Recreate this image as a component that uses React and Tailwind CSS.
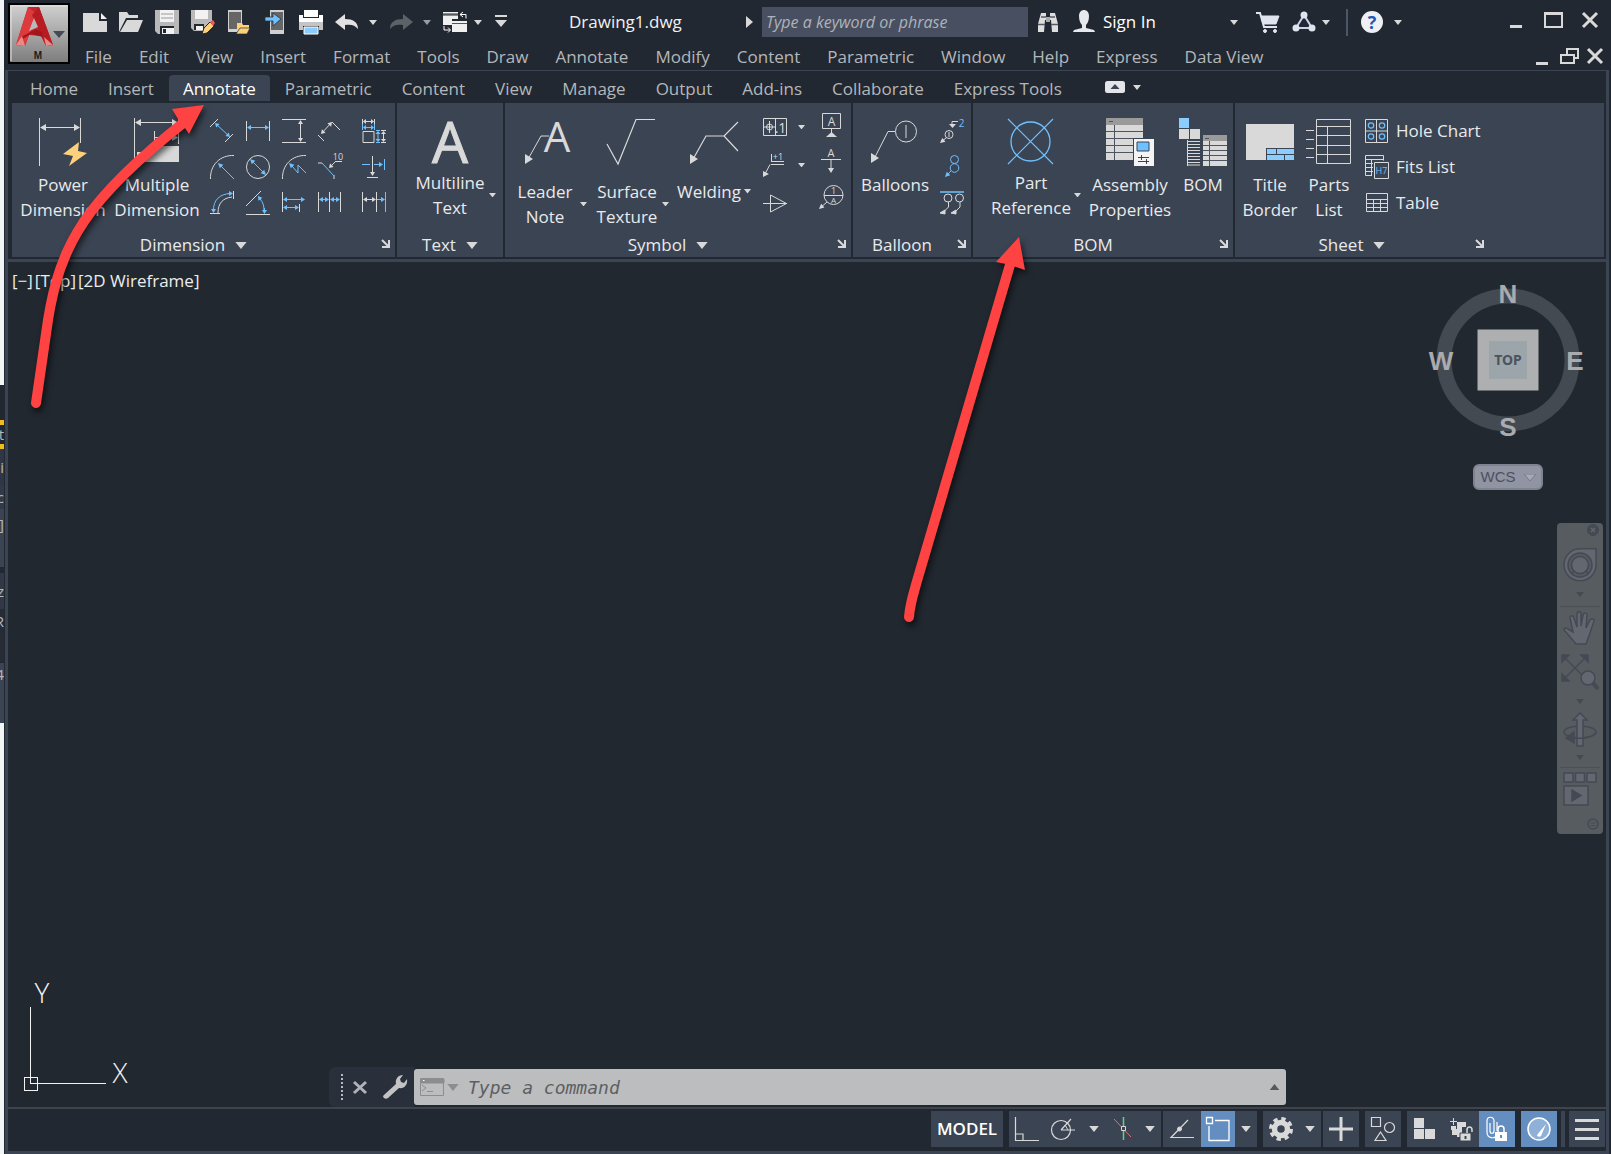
import React from "react";

const W = "#d9d9d9";
const B = "#6fc0ff";

function Caret({ size = 8, color = W, up = false }) {
  return (
    <svg width={size} height={size / 2 + 1} viewBox="0 0 8 5" fill={color} aria-hidden="true">
      <path d={up ? "M0 5h8L4 0z" : "M0 0h8L4 5z"} />
    </svg>
  );
}

function DropButton({ label, className = "w-4 h-8", size = 8, color = W }) {
  return (
    <button aria-label={label} className={"flex shrink-0 items-center justify-center " + className}>
      <Caret size={size} color={color} />
    </button>
  );
}

function Icon({ s = 24, w = s, h = s, children, ...rest }) {
  return (
    <svg width={w} height={h} viewBox={`0 0 ${w} ${h}`} fill="none" stroke={W} aria-hidden="true" className="shrink-0 overflow-visible" {...rest}>
      {children}
    </svg>
  );
}

function IconButton({ label, className = "", children }) {
  return (
    <button aria-label={label} className={"flex h-6 w-6 shrink-0 items-center justify-center " + className}>
      {children}
    </button>
  );
}

/* Line with optional arrow heads at either end */
function Arrow({ x1, y1, x2, y2, c = W, s = 4, start = false, end = true, hw = 2.5 }) {
  const l = Math.hypot(x2 - x1, y2 - y1);
  const ux = (x2 - x1) / l;
  const uy = (y2 - y1) / l;
  const head = (x, y, dx, dy) =>
    `M${x} ${y}L${x - dx * s - dy * hw} ${y - dy * s + dx * hw}L${x - dx * s + dy * hw} ${y - dy * s - dx * hw}z`;
  return (
    <g stroke="none">
      <path d={`M${x1 + (start ? ux * 2 : 0)} ${y1 + (start ? uy * 2 : 0)}L${x2 - (end ? ux * 2 : 0)} ${y2 - (end ? uy * 2 : 0)}`} stroke={c} />
      {end && <path d={head(x2, y2, ux, uy)} fill={c} />}
      {start && <path d={head(x1, y1, -ux, -uy)} fill={c} />}
    </g>
  );
}

function T({ x, y, size, children, fill = W, weight = 400 }) {
  return (
    <text x={x} y={y} fontSize={size} fill={fill} stroke="none" textAnchor="middle" fontWeight={weight} fontFamily="'Open Sans', sans-serif">
      {children}
    </text>
  );
}

/* ---------- Title bar ---------- */

function AppButton() {
  return (
    <button aria-label="Application menu" className="mt-[3px] ml-[3px] h-[61px] w-[62px] shrink-0 border-2 border-black bg-linear-to-b from-[#d0d0d0] via-[#a8a8a8] to-[#7d7d7d]">
      <svg width="58" height="57" viewBox="0 0 58 57" aria-hidden="true">
        <path d="M1 56V1h56" stroke="#e4e4e4" fill="none" />
        <path d="M18 2h11l14 38-7 1-5-10-12-1-4 11-9-1z" fill="#c8262b" />
        <path d="M18 2L6 40l9 1 12-32z" fill="#dc3a3c" />
        <path d="M29 2l14 38-7 1-14-31z" fill="#b71c22" />
        <path d="M11 32l15-8 6 3 1 5-12-3-10 6z" fill="#a3171c" />
        <path d="M24 13l-5 13 9-4z" fill="#b9b9b9" />
        <path d="M6 40l6-9 3 10zM36 41l-2-9 9 8z" fill="#e88a86" />
        <path d="M43 26h12l-6 7z" fill="#444b55" />
        <text x="28" y="54" fontSize="10" fontWeight="700" textAnchor="middle" fill="#1c1c1c" fontFamily="'Liberation Sans', sans-serif">M</text>
      </svg>
    </button>
  );
}

const quickTools = [
  ["New", <g stroke="none"><path d="M0 3h16v8h8v11H0z" fill={W} /><path d="M18 3v6h6z" fill="#f4f4f4" /></g>],
  ["Open", <g stroke="none"><path d="M0 2h8l2 3h9v3H7L2 18l-2 4z" fill={W} /><path d="M8 10h16l-5 12H1z" fill={W} /></g>],
  ["Save", <g stroke="none"><path d="M0 0h24v24H3l-3-3z" fill="#b9b9b9" /><path d="M5 0h14v12H5z" fill="#f2f2f2" /><path d="M6 4h12M6 8h12" stroke="#9a9a9a" /><path d="M5 16h14v8H5z" fill="#222831" /><path d="M7 18h12v6H7z" fill="#f2f2f2" /><path d="M8 19h3v4H8z" fill="#222831" /></g>],
  ["Save As", <g stroke="none"><path d="M0 0h21v12l-8 9H3l-3-3z" fill="#b9b9b9" /><path d="M4 0h13v9H4z" fill="#f2f2f2" /><path d="M3 14h10v6H3z" fill="#222831" /><path d="M5 16h7v4H5z" fill="#f2f2f2" /><path d="M13 18l6-6 4 4-7 7-5 1z" fill="#fdd17a" stroke="#222831" /><path d="M19 12l3-2 2 3-2 3z" fill="#ee5a5a" /></g>],
  ["Open from Web", <g stroke="none"><path d="M1 0h14v22H1z" fill="#d0d0d0" /><path d="M2 2h12v17H2z" fill="#666" /><path d="M10 13h5l1 2h6v3h-8l-4 5z" fill="#fdd17a" /><path d="M13 18h10l-3 6H9z" fill="#fdd17a" stroke="#222831" strokeWidth=".7" /></g>],
  ["Save to Web", <g stroke="none"><path d="M7 0h14v24H7z" fill="#d0d0d0" /><path d="M8 2h12v18H8z" fill="#666" /><path d="M2 7h8V3l8 6-8 7v-5H2z" fill={B} stroke="#222831" strokeWidth=".7" /></g>],
  ["Plot", <g stroke="none"><path d="M5 0h14v7H5z" fill="#fff" /><path d="M0 5h4v3h16V5h4v7H0z" fill="#fff" /><path d="M0 12h24v8h-4v-4H4v4H0z" fill="#c4c4c4" /><path d="M5 17h14v7H5z" fill="#8ccdff" stroke="#fff" /></g>],
  ["Undo", <path stroke="none" fill="#e2e2e2" d="M0 12l10-8v5c8 0 13 3 13 10-3-4-7-5-13-4v5z" />],
];

function QuickAccess() {
  return (
    <div className="ml-[13px] flex shrink-0 items-center">
      <div className="flex gap-3">
        {quickTools.map(([label, art]) => (
          <IconButton key={label} label={label}><Icon>{art}</Icon></IconButton>
        ))}
      </div>
      <DropButton label="Undo list" className="ml-1.5 h-8 w-4" />
      <IconButton label="Redo" className="ml-2">
        <Icon><path stroke="none" fill="#5d6268" d="M24 12L14 4v5C6 9 1 12 1 19c3-4 7-5 13-4v5z" /></Icon>
      </IconButton>
      <DropButton label="Redo list" className="ml-1.5 h-8 w-4" color="#9a9da1" />
      <IconButton label="Workspace switch" className="ml-2">
        <Icon stroke="none"><path d="M0 2h15v7H9v6H0z" fill="#f0f0f0" /><path d="M0 4h15M0 5h15" stroke="#222831" /><path d="M9 11h15v11H9z" fill="#f0f0f0" /><path d="M9 13.500h15" stroke="#555" /><path d="M17 4.500h6v4M17 4.500l3-2.500M17 4.500l3 2.500M1 16v4h6M5 17.500l2.500 2.500L5 22.500" stroke="#fff" fill="none" /></Icon>
      </IconButton>
      <DropButton label="Workspace list" className="ml-[3px] h-8 w-4" />
      <IconButton label="Customize toolbar" className="ml-[3px]">
        <Icon stroke="none"><path d="M6 5h12v2H6zM6 10h12l-6 7z" fill={W} /></Icon>
      </IconButton>
    </div>
  );
}

function TitleRow() {
  return (
    <div className="flex h-11 items-center">
      <QuickAccess />
      <h1 className="ml-14 w-[171px] shrink-0 text-[17px] leading-6 text-[#f1f1f1]">Drawing1.dwg</h1>
      <button aria-label="Show search" className="flex h-8 w-[22px] shrink-0 items-center">
        <svg width="7" height="12" viewBox="0 0 7 12" fill={W} className="ml-1.5" aria-hidden="true"><path d="M0 0l7 6-7 6z" /></svg>
      </button>
      <input aria-label="Search help" placeholder="Type a keyword or phrase" className="h-[30px] w-[266px] shrink bg-[#474f61] px-1 text-[16px] italic text-white outline-none placeholder:text-[#aeb3bb]" />
      <IconButton label="Search" className="ml-2">
        <Icon stroke="none">
          <path d="M5 3h5v7H9l-1 12H2v-8zM14 3h5l3 11v8h-6l-1-12h-1z" fill="#dedede" />
          <path d="M10 7h4v5h-4z" fill="#a9a9a9" /><path d="M2 14.500h7M15 14.500h7M5 7h5M14 7h5" stroke="#555b63" strokeWidth="1.500" />
        </Icon>
      </IconButton>
      <button className="ml-3 flex shrink-0 items-center gap-[7px] text-[17px] text-white">
        <Icon stroke="none"><path d="M7 6c0-8 10-8 10 0 0 4-1 7-3 9v3l8 2 1 2H1l1-2 8-2v-3C8 13 7 10 7 6z" fill="#e6e8ee" /></Icon>
        <span className="w-[123px] text-left">Sign In</span>
      </button>
      <DropButton label="Account menu" />
      <IconButton label="App store" className="ml-3.5">
        <Icon stroke="#e0e4ee"><path d="M0 3h4l4 14h13" strokeWidth="2" /><path d="M5 6h18l-3 8H7z" fill="#e0e4ee" /><circle cx="9" cy="21" r="1.500" fill="#e0e4ee" /><circle cx="19" cy="21" r="1.500" fill="#e0e4ee" /></Icon>
      </IconButton>
      <IconButton label="Autodesk account" className="ml-3">
        <Icon stroke="#e0e4ee" strokeWidth="2"><path d="M12 5L4 18h16z" stroke="#c9d2ee" /><circle cx="12" cy="5" r="2.500" fill="#e0e4ee" /><circle cx="4" cy="18" r="2.500" fill="#e0e4ee" /><circle cx="20" cy="18" r="2.500" fill="#e0e4ee" /></Icon>
      </IconButton>
      <DropButton label="Autodesk account list" className="ml-0.5 h-8 w-4" />
      <span className="ml-3 h-[27px] w-0.5 shrink-0 bg-[#4b5668]" />
      <IconButton label="Help" className="ml-3">
        <Icon stroke="none"><circle cx="12" cy="12" r="11" fill="#eef0f4" /><text x="12" y="19" fontSize="18" fontWeight="700" fill="#1f57b8" textAnchor="middle" fontFamily="'Open Sans', sans-serif">?</text></Icon>
      </IconButton>
      <DropButton label="Help list" className="ml-1.5 h-8 w-4" />
      <div className="mr-[9px] ml-auto flex gap-3">
        <IconButton label="Minimize"><Icon><path d="M4 16.500h12" strokeWidth="3" /></Icon></IconButton>
        <IconButton label="Maximize"><Icon><path d="M3 3h17v14H3z" strokeWidth="2" /><path d="M2 3.500h19" strokeWidth="3" /></Icon></IconButton>
        <IconButton label="Close"><Icon><path d="M5 3l14 14M19 3L5 17" strokeWidth="3" /></Icon></IconButton>
      </div>
    </div>
  );
}

const menus = ["File", "Edit", "View", "Insert", "Format", "Tools", "Draw", "Annotate", "Modify", "Content", "Parametric", "Window", "Help", "Express", "Data View"];

function MenuRow() {
  return (
    <div className="flex h-[26px] items-center">
      <nav aria-label="Menu bar" className="ml-[15px] flex gap-[27px]">
        {menus.map((m) => (
          <button key={m} className="text-[17px] leading-6 whitespace-nowrap text-[#b4b7ba]">{m}</button>
        ))}
      </nav>
      <div className="mr-1 ml-auto flex">
        <IconButton label="Minimize drawing"><Icon><path d="M1 18.500h12" strokeWidth="3" /></Icon></IconButton>
        <IconButton label="Restore drawing"><Icon><path d="M2 10h13v8H2zM8 9V4h11v9h-3" strokeWidth="2" /></Icon></IconButton>
        <IconButton label="Close drawing"><Icon><path d="M5 4l14 14M19 4L5 18" strokeWidth="3" /></Icon></IconButton>
      </div>
    </div>
  );
}

/* ---------- Ribbon ---------- */

const tabs = ["Home", "Insert", "Annotate", "Parametric", "Content", "View", "Manage", "Output", "Add-ins", "Collaborate", "Express Tools"];

function Tabs() {
  return (
    <nav aria-label="Ribbon tabs" className="flex h-8 items-end pl-[7px]">
      {tabs.map((t) => (
        <button
          key={t}
          className={t === "Annotate"
            ? "mb-0.5 h-[26px] rounded-t-sm bg-[#3b4453] px-3.5 pt-0.5 text-[17px] leading-6 text-white"
            : "mb-0.5 h-[26px] px-[15px] pt-0.5 text-[17px] leading-6 whitespace-nowrap text-[#b4b7ba]"}
        >
          {t}
        </button>
      ))}
      <button aria-label="Minimize ribbon" className="mb-2.5 ml-7 flex items-center gap-2">
        <svg width="20" height="12" viewBox="0 0 20 12" aria-hidden="true"><rect width="20" height="12" rx="2.500" fill="#e3e5e9" /><path d="M5.500 8h9L10 3z" fill="#3b4453" /></svg>
        <Caret />
      </button>
    </nav>
  );
}

function Panel({ label, menu = false, launcher = false, fill = false, children }) {
  return (
    <section aria-label={label} className={"flex h-[154px] bg-[#3b4453] " + (fill ? "grow" : "shrink-0")}>
      <div className="flex flex-col">
        <div className="flex grow items-start">{children}</div>
        <div className="flex h-6 items-center">
          <button className="flex grow items-center justify-center gap-2.5 text-[17px] leading-6">
            {label}
            {menu && <Caret size={12} />}
          </button>
          {launcher && (
            <button aria-label={label + " settings"} className="flex w-5 justify-center pb-1">
              <Icon s={9} strokeWidth="2"><path d="M1 1l6 6M8 1v7H1" /></Icon>
            </button>
          )}
        </div>
      </div>
    </section>
  );
}

function Big({ icon, lines, split = false, gap = "mt-1.5", width }) {
  return (
    <button className="mt-[15px] flex flex-col items-start">
      <span className={"flex h-12 justify-center " + width}>{icon}</span>
      <span className={"flex items-center " + gap}>
        <span className={"flex flex-col items-center text-[17px] leading-[25px] whitespace-nowrap " + width}>
          {lines.map((l) => <span key={l}>{l}</span>)}
        </span>
        {split && <span className="flex w-3 justify-center"><Caret size={7} /></span>}
      </span>
    </button>
  );
}

const dimRows = [
  [
    ["Aligned", <><path d="M0 8l8-8M15 23l8-8" /><Arrow x1={5} y1={4} x2={20} y2={18} c={B} start /></>],
    ["Linear", <><path d="M.5 2v20M23.500 2v20" /><Arrow x1={1} y1={8.500} x2={23} y2={8.500} c={B} start /></>],
    ["Vertical", <><path d="M0 .5h24M0 23.500h24" /><Arrow x1={18.500} y1={1} x2={18.500} y2={23} start /></>],
    ["Rotated", <><path d="M0 16l6 6M14 3l8 8" /><Arrow x1={3} y1={15} x2={14} y2={3} start /></>],
    ["Ordinate frame", <><path d="M.5 0v11M12.500 0v11" stroke={B} /><path d="M.5 0v5M12.500 0v5M1 12.500h11v11H1z" /><Arrow x1={1} y1={2.500} x2={12} y2={2.500} start s={3} /><Arrow x1={1} y1={8.500} x2={12} y2={8.500} c={B} start s={3} /><path d="M14 11.500h4M14 23.500h4" stroke={B} /><path d="M19 11.500h5M19 23.500h5" /><Arrow x1={16} y1={12} x2={16} y2={23} c={B} start s={3} /><Arrow x1={21.500} y1={12} x2={21.500} y2={23} start s={3} /></>],
  ],
  [
    ["Radius", <><path d="M.5 24C0 10 10 0 24 .5" /><Arrow x1={24} y1={24} x2={8} y2={8} c={B} s={5} /></>],
    ["Diameter", <><circle cx="12" cy="12" r="11.500" /><Arrow x1={4} y1={4} x2={20} y2={20} c={B} s={5} start /></>],
    ["Jogged", <><path d="M.5 24C0 10 10 0 24 .5" /><path d="M24 18l-8-8v8l-6-7" stroke={B} /><Arrow x1={11} y1={12} x2={7} y2={8} c={B} s={5} /></>],
    ["Chamfer", <><path d="M0 8h4M16 20v4" /><path d="M4 8l12 13" stroke={B} /><Arrow x1={18} y1={6} x2={11} y2={13} s={4} /><path d="M17 6.500h7" /><T x={20} y={5} size={9}>10</T></>],
    ["Break", <><path d="M0 9.500h8" stroke={B} /><Arrow x1={12} y1={9.500} x2={21} y2={9.500} c={B} /><path d="M22.500 4v11" stroke={B} /><Arrow x1={10.500} y1={1} x2={10.500} y2={21} /><path d="M5 22.500h11" /></>],
  ],
  [
    ["Arc length", <><path d="M0 22.500h10M23.500 0v8M8 22C8 12 13 7 22 6" /><path d="M3.500 20C3 9 10 3 20 2.500" stroke={B} /><Arrow x1={3.500} y1={18} x2={3.500} y2={22} c={B} /><Arrow x1={18} y1={2.500} x2={23} y2={2.500} c={B} /></>],
    ["Angular", <><path d="M0 23.500h24M0 15L15 0" /><path d="M14 8c3 3 4 7 4 11" stroke={B} /><Arrow x1={15} y1={9} x2={12} y2={5} c={B} /><Arrow x1={18.500} y1={17} x2={18.500} y2={23} c={B} /></>],
    ["Baseline", <><path d="M.5 1v20M17.500 13v8" /><Arrow x1={1} y1={8.500} x2={23} y2={8.500} c={B} start /><Arrow x1={1} y1={16.500} x2={17} y2={16.500} c={B} start /></>],
    ["Continue", <><path d="M.5 1v20M11.500 1v20M22.500 1v20" /><Arrow x1={1} y1={8.500} x2={11} y2={8.500} c={B} start /><Arrow x1={12} y1={8.500} x2={22} y2={8.500} c={B} start /></>],
    ["Chain", <><path d="M.5 1v20M14.500 1v20" /><path d="M23.500 1v20" stroke={B} /><Arrow x1={1} y1={8.500} x2={14} y2={8.500} start /><Arrow x1={15} y1={8.500} x2={23} y2={8.500} c={B} /></>],
  ],
];

function DimensionPanel() {
  return (
    <Panel label="Dimension" menu launcher>
      <div className="flex pr-2 pl-1">
        <Big width="w-[94px]" lines={["Power", "Dimension"]} icon={
          <Icon s={48}><path d="M.5 0v48M41.500 0v25" /><Arrow x1={1} y1={9.500} x2={41} y2={9.500} start s={6} hw={3.500} /><path d="M40 24L24 36l10 2-4 10 18-13-9-2z" fill="#fdd17a" stroke="none" /></Icon>} />
        <Big width="w-[94px]" lines={["Multiple", "Dimension"]} icon={
          <Icon s={48}><path d="M1.500 0v42M45.500 0v26M21.500 13v19" /><Arrow x1={2} y1={4.500} x2={45} y2={4.500} start s={6} hw={3.500} /><Arrow x1={22} y1={19.500} x2={45} y2={19.500} s={6} hw={3.500} /><path d="M4 34h17v-6h25v16H4z" fill={W} stroke="none" /></Icon>} />
        <div className="mt-4 ml-1.5 flex flex-col gap-3">
          {dimRows.map((row, i) => (
            <div key={i} className="flex gap-3">
              {row.map(([label, art], j) => (
                <IconButton key={label} label={label} className={j === 4 ? "ml-2" : ""}><Icon>{art}</Icon></IconButton>
              ))}
            </div>
          ))}
        </div>
        <span className="w-px" />
      </div>
    </Panel>
  );
}

function TextPanel() {
  return (
    <Panel label="Text" menu>
      <div className="flex pr-[5px] pl-[17px]">
        <Big width="w-[72px]" split gap="mt-1" lines={["Multiline", "Text"]} icon={
          <Icon s={48}><text x="24" y="45" fontSize="57" stroke={W} strokeWidth="1" fill={W} textAnchor="middle" fontFamily="'Open Sans', sans-serif">A</text></Icon>} />
      </div>
    </Panel>
  );
}

function SymbolPanel() {
  return (
    <Panel label="Symbol" menu launcher>
      <div className="flex pr-2 pl-2">
        <Big width="w-[64px]" split gap="mt-[13px]" lines={["Leader", "Note"]} icon={
          <Icon s={48}><path d="M6 43l14-25h8" /><path d="M4 46V36l8 5z" fill={W} stroke="none" /><text x="36" y="34" fontSize="42" fill={W} stroke="none" textAnchor="middle" fontFamily="'Open Sans', sans-serif">A</text></Icon>} />
        <span className="w-1.5" />
        <Big width="w-[64px]" split gap="mt-[13px]" lines={["Surface", "Texture"]} icon={
          <Icon s={48}><path d="M4 26l11 20L33 1.500h19" strokeWidth="1.200" /></Icon>} />
        <span className="w-1.5" />
        <Big width="w-[64px]" split gap="mt-[13px]" lines={["Welding"]} icon={
          <Icon s={48}><path d="M7 43l14-25h19M53 4L39 18l14 15" strokeWidth="1.200" /><path d="M5 46V36l8 5z" fill={W} stroke="none" /></Icon>} />
        <div className="mt-3 ml-2.5 flex flex-col gap-3.5">
          <div className="flex gap-2">
            <IconButton label="Feature control frame"><Icon><path d="M.5 3.500h23v17H.5zM12.500 4v17M1 12h11M6.500 6v12" /><circle cx="6.500" cy="12" r="3" /><T x={17.500} y={18} size={14}>.1</T></Icon></IconButton>
            <DropButton label="Feature control frame list" className="h-6 w-3" size={7} />
          </div>
          <div className="flex gap-2">
            <IconButton label="Datum target"><Icon><path d="M8.500 1v7M8 8.500h13M8 11.500h13M7 11.500L2 21" /><path d="M0 24v-6l6 3z" fill={W} stroke="none" /><T x={15} y={7} size={9}>+1</T></Icon></IconButton>
            <DropButton label="Datum target list" className="h-6 w-3" size={7} />
          </div>
          <IconButton label="Taper symbol"><Icon><path d="M0 12.500h24M7.500 4v17l16-8.500z" /></Icon></IconButton>
        </div>
        <div className="mt-[10px] ml-3 flex flex-col gap-3">
          <IconButton label="Datum identifier"><Icon><path d="M3.500.5h18v15h-18zM12.500 16v6" /><path d="M7 24h11l-5.500-5z" fill={W} stroke="none" /><T x={12.500} y={12.500} size={12}>A</T></Icon></IconButton>
          <IconButton label="Feature identifier"><Icon><path d="M2 10.500h20" /><Arrow x1={12} y1={11} x2={12} y2={24} s={5} hw={3} /><T x={12} y={8} size={11}>A</T></Icon></IconButton>
          <IconButton label="Edge symbol"><Icon><circle cx="14.500" cy="10" r="9.500" /><path d="M5 10.500h19" /><Arrow x1={8} y1={17} x2={0} y2={24} s={5} /><T x={14.500} y={8.500} size={9}>1</T><T x={14.500} y={18} size={8}>A</T></Icon></IconButton>
        </div>
      </div>
    </Panel>
  );
}

function BalloonPanel() {
  return (
    <Panel label="Balloon" launcher>
      <div className="flex pr-[7px] pl-0.5">
        <Big width="w-20" lines={["Balloons"]} icon={
          <Icon s={48}><circle cx="35" cy="13.500" r="10.500" /><path d="M35 7v13M24 13.500h-7L3 41" /><path d="M0 45V35l8 5z" fill={W} stroke="none" /></Icon>} />
        <div className="mt-4 ml-[5px] flex flex-col gap-3">
          <IconButton label="Renumber balloons"><Icon><circle cx="9" cy="15.500" r="4" /><path d="M9 13v5M18 2.500h-6v4" /><path d="M9 5h7l-3.500 4z" fill={W} stroke="none" /><Arrow x1={6} y1={19} x2={0} y2={24} s={5} /><T x={21.500} y={7.500} size={10} fill={B}>2</T></Icon></IconButton>
          <IconButton label="Collect balloons"><Icon stroke={B}><circle cx="14.500" cy="4.500" r="4" /><circle cx="14.500" cy="13" r="4.300" /><Arrow x1={11} y1={16} x2={5} y2={22} c={B} s={5} /></Icon></IconButton>
          <IconButton label="Arrange balloons"><Icon><path d="M0 1h24" stroke={B} strokeWidth="1.500" /><circle cx="8" cy="7" r="4" /><circle cx="19.500" cy="7" r="4" /><path d="M8.500 11v5l-4 4M20 11v5l-4 4" /><path d="M0 22l5-3v4zM11 22l5-3v4z" fill={W} /></Icon></IconButton>
        </div>
      </div>
    </Panel>
  );
}

function BomPanel() {
  return (
    <Panel label="BOM" launcher>
      <div className="flex pr-0.5 pl-[18px]">
        <Big width="w-20" split gap="mt-1" lines={["Part", "Reference"]} icon={
          <Icon s={48} stroke={B}><circle cx="23.500" cy="23.500" r="19.500" strokeWidth="1.300" /><path d="M1 1l45 45M46 1L1 46" strokeWidth="1.200" /></Icon>} />
        <span className="w-[5px]" />
        <Big width="w-[84px]" lines={["Assembly", "Properties"]} icon={
          <Icon s={48} stroke="none">
            <path d="M0 0h37v7H0z" fill="#9a9a9a" /><path d="M0 7h37v35H0z" fill={W} />
            <path d="M0 13.500h37M0 20.500h37M0 27.500h37M0 34.500h37M8.500 7v35M3 3.500h4" stroke="#4d545f" />
            <path d="M27 20h22v29H27z" fill="#3b4453" /><path d="M28 21h20v27H28z" fill="#f4f4f4" />
            <path d="M31 24h12v9H31z" fill={B} stroke="#3b4453" /><path d="M32 39.500h11M35.500 37v5M32 43.500h11M40.500 41v5" stroke="#3b4453" />
          </Icon>} />
        <span className="w-[3px]" />
        <Big width="w-14" lines={["BOM"]} icon={
          <Icon s={48} stroke="none">
            <path d="M0 0h10v10H0z" fill="#8ccdff" /><path d="M0 11h10v10H0zM11 11h10v10H11z" fill={W} />
            <path d="M8.500 22v26" stroke={W} />
            <path d="M9 23.500h12M9 26.500h12M9 29.500h12M9 32.500h12M9 35.500h12M9 38.500h12M9 41.500h12M9 44.500h12M9 47h12" stroke={W} />
            <path d="M24 17h24v6H24z" fill="#9a9a9a" /><path d="M24 23h24v25H24z" fill={W} />
            <path d="M24 27.500h24M24 32.500h24M24 37.500h24M24 42.500h24M30.500 23v25M26 20.500h4" stroke="#4d545f" />
          </Icon>} />
      </div>
    </Panel>
  );
}

const sheetList = [
  ["Hole Chart", <><path d="M.5.5h22v23H.5zM11.500 0v23M0 12h23" /><g stroke={B} strokeWidth="1.200"><circle cx="6" cy="6.500" r="2.700" /><circle cx="17" cy="6.500" r="2.700" /><circle cx="6" cy="17.500" r="2.700" /><circle cx="17" cy="17.500" r="2.700" /></g></>],
  ["Fits List", <><path d="M6 20.500H.5V.5h18v5M0 4.500h19M0 8.500h8M0 12.500h8M0 16.500h8M6.500 5v16" /><path d="M9.500 7.500h14v16h-14z" /><T x={16.500} y={19} size={9} fill={B}>H7</T></>],
  ["Table", <><path d="M1.500 2.500h21v18h-21zM1 8.500h22M1 12.500h22M1 16.500h22M8.500 9v12M15.500 9v12" /></>],
];

function SheetPanel() {
  return (
    <Panel label="Sheet" menu launcher fill>
      <div className="flex pr-2 pl-[3px]">
        <Big width="w-16" lines={["Title", "Border"]} icon={
          <Icon s={48} stroke="none"><path d="M0 6h48v36H0z" fill={W} /><path d="M20 30h28v12H20z" fill="#3b4453" /><path d="M21 31h9v5h-9zM31 31h17v5H31zM21 37h17v5H21zM39 37h9v5h-9z" fill="#8ccdff" /></Icon>} />
        <Big width="w-[54px]" lines={["Parts", "List"]} icon={
          <Icon s={48} ><path d="M11.500 1.500h34v44h-34zM11 8.500h35M11 17.500h35M11 27.500h35M11 36.500h35M22.500 9v37M1 12.500h8M1 21.500h8M1 30.500h8M1 39.500h8" /></Icon>} />
        <div className="mt-4 ml-[9px] flex flex-col gap-3">
          {sheetList.map(([label, art]) => (
            <button key={label} className="flex h-6 w-[116px] items-center gap-[7px] text-[17px] whitespace-nowrap">
              <Icon>{art}</Icon>{label}
            </button>
          ))}
        </div>
      </div>
    </Panel>
  );
}

/* ---------- Drawing canvas ---------- */

function ViewCube() {
  return (
    <div className="absolute top-3.5 right-3.5 flex flex-col items-center">
      <svg width="168" height="168" viewBox="0 0 168 168" role="img" aria-label="View cube" fontFamily="'Liberation Sans', sans-serif" fontWeight="700" fontSize="26" fill="#a9abae" textAnchor="middle">
        <circle cx="84" cy="84" r="64" fill="none" stroke="#434a52" strokeWidth="15" />
        <rect x="53.500" y="53.500" width="61" height="61" fill="#adafb1" />
        <rect x="65" y="65" width="38" height="38" fill="#9ca5aa" />
        <text x="84" y="89" fontSize="14" fill="#4b535e" fontFamily="'Noto Sans', sans-serif">TOP</text>
        <text x="84" y="27">N</text>
        <text x="17" y="94">W</text>
        <text x="151" y="94">E</text>
        <text x="84" y="160">S</text>
      </svg>
      <button className="mt-5 flex h-[26px] w-[70px] items-center justify-center gap-2 rounded-md border-2 border-[#7f828f] bg-[#9194a3] font-['Liberation_Sans',sans-serif] text-[15px] text-[#4c505c]">
        WCS
        <svg width="12" height="7" viewBox="0 0 12 7" aria-hidden="true"><path d="M0 0h12L6 7z" fill="#a7aab6" stroke="#777a88" /></svg>
      </button>
    </div>
  );
}

function NavBar() {
  const S = "#444a54";
  const F = "#626770";
  return (
    <div className="absolute top-[261px] right-[3px] flex w-[46px] flex-col items-center rounded-sm bg-[#575c60] pt-px">
      <button aria-label="Close navigation bar" className="mr-1 self-end"><Icon s={12} stroke={S}><circle cx="6" cy="6" r="5.500" fill={S} /><path d="M4 4l4 4M8 4l-4 4" stroke="#62676c" strokeWidth="1.500" /></Icon></button>
      <button aria-label="Steering wheel" className="mt-3"><Icon s={34} stroke={S} strokeWidth="1.500"><path d="M17 .8h16v16a16 16 0 1 1-16-16z" fill={F} /><circle cx="17" cy="17" r="12" fill="#555a60" /><circle cx="17" cy="17" r="8.500" fill={F} /><path d="M8 26l3-3M26 26l-3-3" /></Icon></button>
      <DropButton label="Wheel list" className="mt-1 h-4 w-6" color={S} />
      <span className="mt-1 h-px w-10 bg-[#4a5056]" />
      <button aria-label="Pan" className="mt-1"><Icon s={34} stroke={S} strokeWidth="1.500"><path d="M13 33L3 21c-4-3-1-5 2-3l5 3L7 7c0-3 3-3 4 0l3 9V3c0-3 4-3 4 0v12l2-11c1-3 4-2 4 0l-1 13 4-8c1-2 5-1 4 1l-5 15-3 8z" fill={F} /></Icon></button>
      <button aria-label="Zoom extents" className="mt-2.5"><Icon s={36} stroke={S} strokeWidth="1.500"><path d="M2 2l22 22M24 2L2 24" /><path d="M0 0h7L0 7zM26 0v7l-7-7zM0 26v-7l7 7z" fill={S} /><circle cx="26" cy="23" r="7" fill={F} /><path d="M31 28l5 6" strokeWidth="4" /></Icon></button>
      <DropButton label="Zoom list" className="mt-0.5 h-4 w-6" color={S} />
      <button aria-label="Orbit" className="mt-1"><Icon s={34} stroke={S} strokeWidth="1.500"><ellipse cx="17" cy="19" rx="16" ry="6" /><path d="M14 33V7h-4l7-7 7 7h-4v26z" fill={F} /><path d="M11 19v11l-8-5z" fill={S} /><path d="M11 25c10 1 20-1 22-6" /></Icon></button>
      <DropButton label="Orbit list" className="mt-0.5 h-4 w-6" color={S} />
      <span className="mt-0.5 h-px w-10 bg-[#4a5056]" />
      <button aria-label="Show motion" className="mt-1"><Icon s={34} stroke={S} strokeWidth="1.500"><path d="M1 1h9v9H1zM12.500 1h9v9h-9zM24 1h9v9h-9zM1 14h24v19H1z" fill={F} /><path d="M9 18v11l9-5.500z" fill={S} /></Icon></button>
      <button aria-label="Navigation bar options" className="mt-3 mr-1 mb-1 self-end"><Icon s={12} stroke={S}><circle cx="6" cy="6" r="5" strokeWidth="1.500" /><path d="M3.500 5h5M3.500 7.500h5" /></Icon></button>
    </div>
  );
}

function UcsIcon() {
  return (
    <svg width="114" height="112" viewBox="0 0 114 112" role="img" aria-label="Coordinate axes" className="absolute bottom-4 left-4" fill="none" stroke="#f2f2f2" strokeWidth="1.200" shapeRendering="crispEdges">
      <path d="M.5 98.500h13v13H.5zM6.500 104.500V28M6.500 104.500H82" />
      <text x="18" y="24" fontSize="28" fontWeight="300" fontFamily="'Open Sans', Inter, sans-serif" textAnchor="middle" fill="#f2f2f2" stroke="none">Y</text>
      <text x="96" y="104" fontSize="28" fontWeight="300" fontFamily="'Open Sans', Inter, sans-serif" textAnchor="middle" fill="#f2f2f2" stroke="none">X</text>
    </svg>
  );
}

function CommandLine() {
  return (
    <div className="absolute right-80 bottom-0 left-[321px] flex h-10 items-center">
      <div className="flex h-10 w-[85px] shrink-0 items-center rounded-l-md bg-[#2a2f3c]">
        <span className="ml-3 h-[26px] border-l-2 border-dotted border-[#b9bbbe]" />
        <button aria-label="Close command line" className="ml-2.5"><Icon s={14} stroke="#b0b2b5" strokeWidth="3"><path d="M1 2l12 11M13 2L1 13" /></Icon></button>
        <button aria-label="Customize command line" className="ml-4"><Icon s={24} stroke="none"><path d="M1 23c-2-2 0-3 1-4l11-10c-1-5 2-9 7-9l-3 4 1 3 3 1 3-4c1 6-3 10-8 9L5 23c-1 1-3 1-4 0z" fill="#c3c3c3" /></Icon></button>
      </div>
      <div className="flex h-9 grow items-center rounded-[3px] bg-[#bbbdbf]">
        <button aria-label="Recent commands" className="ml-1.5 flex items-center gap-0.5">
          <svg width="25" height="18" viewBox="0 0 25 18" fill="none" stroke="#8b8d90" aria-hidden="true"><path d="M.5.5h23v17H.5z" /><path d="M1 1h23v4H1z" fill="#8b8d90" /><path d="M3 2.500h1.500" stroke="#fff" /><path d="M2 7l4 3-4 3M7 13.500h6" /></svg>
          <Caret size={12} color="#8b8d90" />
        </button>
        <input aria-label="Command" placeholder="Type a command" className="ml-[9px] min-w-0 grow bg-transparent font-['DejaVu_Sans_Mono',monospace] text-[18px] text-[#333] italic outline-none placeholder:text-[#5d5f62]" />
        <button aria-label="Command history" className="mr-1.5"><Caret size={11} color="#57595c" up /></button>
      </div>
    </div>
  );
}

function Canvas() {
  return (
    <main className="relative min-h-[640px] grow bg-[#222830]">
      <div className="flex gap-0.5 pt-[7px] pl-1 text-[17px] leading-6 text-[#eceded]">
        <button>[−]</button>
        <button>[Top]</button>
        <button>[2D Wireframe]</button>
      </div>
      <ViewCube />
      <NavBar />
      <UcsIcon />
      <CommandLine />
    </main>
  );
}

/* ---------- Status bar ---------- */

function Tool({ label, on = false, className = "w-9", children }) {
  return (
    <button aria-label={label} className={"flex h-9 shrink-0 items-center justify-center " + (on ? "bg-[#638ebf] " : "") + className}>
      {children}
    </button>
  );
}

function StatusBar() {
  const group = "flex bg-[#3b4453]";
  return (
    <footer className="flex h-[42px] items-start justify-end bg-[#222831] pt-0.5 pr-px">
      <button className="mr-1.5 h-9 w-[72px] bg-[#3b4453] text-[17px] font-semibold text-white">MODEL</button>
      <div className={group + " mr-0.5"}>
        <Tool label="Ortho mode"><Icon><path d="M.5 0v23.500H24M.5 17H8v6.500" strokeWidth="1.200" /></Icon></Tool>
        <Tool label="Polar tracking"><Icon><circle cx="10" cy="13" r="9.500" strokeWidth="1.200" /><path d="M10 13h14M10 13L20 2" strokeWidth="1.200" /><path d="M14 8l3 5" /></Icon></Tool>
        <DropButton label="Polar list" className="h-9 w-[26px]" size={10} />
        <Tool label="Isometric drafting" className="w-8"><Icon><path d="M3 2l17 18" stroke="#e07070" /><path d="M12.500 0v23" stroke="#62d08b" strokeWidth="1.500" /><path d="M10.500 9.500h4v4h-4z" fill="#3b4453" /></Icon></Tool>
        <DropButton label="Isometric list" className="h-9 w-[22px]" size={10} />
      </div>
      <div className={group + " mr-1.5"}>
        <Tool label="Object snap tracking" className="w-[38px]"><Icon><path d="M18 3L1 20.500h23" strokeWidth="1.200" /><circle cx="9.500" cy="12" r="2" fill={W} /></Icon></Tool>
        <Tool label="Object snap" on className="w-[34px]"><Icon stroke="#fff"><path d="M9 3.500h14v20H3V9M.5.500h6v6h-6z" strokeWidth="1.300" /></Icon></Tool>
        <DropButton label="Object snap list" className="h-9 w-[22px]" size={10} />
      </div>
      <div className={group + " mr-0.5"}>
        <Tool label="Workspace settings"><Icon><circle cx="12" cy="12" r="6.500" strokeWidth="5.500" /><circle cx="12" cy="12" r="10" strokeWidth="4" strokeDasharray="4.200 3.654" /></Icon></Tool>
        <DropButton label="Workspace settings list" className="h-9 w-[22px]" size={10} />
      </div>
      <div className={group + " mr-1.5"}>
        <Tool label="Annotation monitor"><Icon><path d="M0 12h24M12 0v24" strokeWidth="3" /></Icon></Tool>
      </div>
      <div className={group + " mr-1.5"}>
        <Tool label="Isolate objects"><Icon><path d="M.5.500h9v9h-9zM9.500 15L4 23.500h11z" strokeWidth="1.200" /><circle cx="18.500" cy="10.500" r="5" strokeWidth="1.200" /></Icon></Tool>
      </div>
      <div className={group + " mr-1.5"}>
        <Tool label="Clean screen"><Icon stroke="none"><path d="M1 1h10v10H1zM1 12h10v10H1zM12 12h10v10H12z" fill={W} /></Icon></Tool>
        <Tool label="Lock interface"><Icon><path d="M4.500 1v7M1 4.500h7" /><path d="M8 5h9v5h-4v10H8v-8H3v6h5v-7z" fill={W} stroke="none" /><path d="M2 9h5v4H2z" fill={W} stroke="none" /><path d="M11 16h11v8H11z" fill={W} stroke="#3b4453" /><path d="M16.500 19v3" stroke="#3b4453" strokeWidth="2" /><path d="M18 16v-3c0-4 5-4 5 0v2" strokeWidth="1.500" /></Icon></Tool>
        <Tool label="Attach" on><Icon stroke="#fff"><path d="M5 6v8c0 3 4 3 4 0V4c0-5-7-5-7 0v11c0 7 8 7 10 3M12 5v9" strokeWidth="1.200" /><path d="M10 15h12v9H10z" fill="#fff" stroke="none" /><path d="M13 15v-3c0-4 6-4 6 0v3" strokeWidth="1.500" /><path d="M16 18v3" stroke="#638ebf" strokeWidth="2" /></Icon></Tool>
      </div>
      <Tool label="Hardware acceleration" on className="mr-1 w-9"><Icon stroke="#fff"><circle cx="12" cy="12" r="11" fill="#8fb1d8" strokeWidth="1.500" /><path d="M10 18l9-11-5 12c-1 1-4 1-4-1z" fill="#fff" stroke="none" /></Icon></Tool>
      <span className="mr-1 h-9 w-1 bg-[#3b4453]" />
      <div className={group}>
        <Tool label="Customization"><Icon><path d="M0 3.500h24M0 12.500h24M0 21.500h24" strokeWidth="3" /></Icon></Tool>
      </div>
    </footer>
  );
}

/* ---------- Slice of the window behind ---------- */

function BackWindow() {
  const row = "flex items-center justify-end overflow-hidden text-[15px] text-[#b4b7ba]";
  return (
    <div className="flex w-1 shrink-0 flex-col overflow-hidden bg-[#f1f5f6]" aria-hidden="true">
      <div className="mt-[385px] h-[35px] bg-[#222831]" />
      <div className="h-[5px] bg-[#f4bb1d]" />
      <div className={"h-[19px] bg-[#222831] " + row}>t</div>
      <div className="h-[5px] bg-[#f4bb1d]" />
      <div className={"h-9 bg-[#2f3746] " + row}>i</div>
      <div className={"h-6 bg-[#323a49] " + row}>c</div>
      <div className={"h-[58px] items-start! bg-[#3b4453] pt-1 " + row}>]</div>
      <div className="h-1.5 bg-[#222831]" />
      <div className={"h-9 bg-[#323846] " + row}>z</div>
      <div className={"h-6 bg-[#262b36] " + row}>R</div>
      <div className="h-[30px] border-b border-[#222831] bg-[#262b36]" />
      <div className={"h-[60px] items-start! bg-[#3b4453] " + row}>4</div>
    </div>
  );
}

function Callouts() {
  return (
    <svg width="1100" height="640" viewBox="0 0 1100 640" aria-hidden="true" className="pointer-events-none absolute top-0 left-0 drop-shadow-[2px_4px_3px_rgba(0,0,0,0.6)]" fill="none" stroke="#ff4242" strokeWidth="10" strokeLinecap="round">
      <path d="M36 403L48 320C60 245 85 200 187 120" />
      <path d="M204 105l-32 4 6 10 5 6 6 9z" fill="#ff4242" stroke="none" />
      <path d="M909 617c1-14 5-25 8-36L1012 258" />
      <path d="M1019 237l-23 25 10 2 10 3 9 3z" fill="#ff4242" stroke="none" />
    </svg>
  );
}

export default function App() {
  return (
    <div className="relative flex min-h-screen overflow-hidden bg-[#222831] font-['Open_Sans',sans-serif] text-[#e8eaec]">
      <BackWindow />
      <div className="ml-px flex min-w-0 grow flex-col">
        <header className="flex h-[70px]">
          <AppButton />
          <div className="flex min-w-0 grow flex-col">
            <TitleRow />
            <MenuRow />
          </div>
        </header>
        <div className="mr-0.5 flex grow flex-col border-x-3 border-t border-b-3 border-[#3b4453]">
          <Tabs />
          <div className="mx-0.5 flex gap-0.5 pl-0.5">
            <DimensionPanel />
            <TextPanel />
            <SymbolPanel />
            <BalloonPanel />
            <BomPanel />
            <SheetPanel />
          </div>
          <div className="mt-0.5 h-[3px] bg-[#3b4453]" />
          <Canvas />
          <div className="h-0.5 bg-[#3f444c]" />
          <StatusBar />
        </div>
      </div>
      <Callouts />
    </div>
  );
}
